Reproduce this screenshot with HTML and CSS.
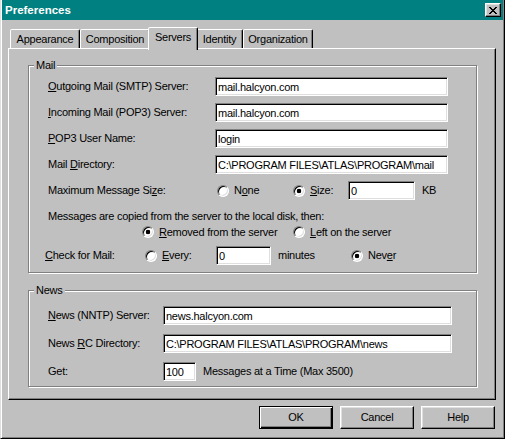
FILE: index.html
```html
<!DOCTYPE html>
<html>
<head>
<meta charset="utf-8">
<title>Preferences</title>
<link rel="stylesheet" href="styles.css">
</head>
<body>
<div class="window">
  <div class="titlebar">
    <span class="title">Preferences</span>
    <span class="close"><svg width="8" height="7" viewBox="0 0 8 7" shape-rendering="crispEdges"><path d="M0 0h2v1h-2zM6 0h2v1h-2zM1 1h2v1h-2zM5 1h2v1h-2zM2 2h4v1h-4zM3 3h2v1h-2zM2 4h4v1h-4zM1 5h2v1h-2zM5 5h2v1h-2zM0 6h2v1h-2zM6 6h2v1h-2z" fill="#000"/></svg></span>
  </div>
  <div class="content">
    <div class="tabs">
      <div class="tab t-app">Appearance</div>
      <div class="tab t-comp">Composition</div>
      <div class="tab t-srv active">Servers</div>
      <div class="tab t-id">Identity</div>
      <div class="tab t-org">Organization</div>
    </div>
    <div class="panel">
      <fieldset class="group mail">
        <legend>Mail</legend>
        <div class="gbody">
          <div class="row"><span class="lbl"><u>O</u>utgoing Mail (SMTP) Server:</span><input class="field w-mail" type="text" value="mail.halcyon.com"></div>
          <div class="row"><span class="lbl"><u>I</u>ncoming Mail (POP3) Server:</span><input class="field w-mail" type="text" value="mail.halcyon.com"></div>
          <div class="row"><span class="lbl"><u>P</u>OP3 User Name:</span><input class="field w-mail" type="text" value="login"></div>
          <div class="row"><span class="lbl">Mail <u>D</u>irectory:</span><input class="field w-mail" type="text" value="C:\PROGRAM FILES\ATLAS\PROGRAM\mail"></div>
          <div class="row">
            <span class="lbl">Maximum Message Si<u>z</u>e:</span>
            <span class="opt o-none"><span class="radio"></span><span>N<u>o</u>ne</span></span>
            <span class="opt o-size"><span class="radio on"></span><span><u>S</u>ize:</span></span>
            <input class="field w-size" type="text" value="0">
            <span class="unit">KB</span>
          </div>
          <div class="note">Messages are copied from the server to the local disk, then:</div>
          <div class="row r-removed">
            <span class="opt o-removed"><span class="radio on"></span><span><u>R</u>emoved from the server</span></span>
            <span class="opt"><span class="radio"></span><span><u>L</u>eft on the server</span></span>
          </div>
          <div class="row">
            <span class="lbl-check"><u>C</u>heck for Mail:</span>
            <span class="opt o-every"><span class="radio"></span><span><u>E</u>very:</span></span>
            <input class="field w-every" type="text" value="0">
            <span class="minutes">minutes</span>
            <span class="opt"><span class="radio on"></span><span>Nev<u>e</u>r</span></span>
          </div>
        </div>
      </fieldset>
      <fieldset class="group news">
        <legend>News</legend>
        <div class="gbody">
          <div class="row"><span class="lbl-n"><u>N</u>ews (NNTP) Server:</span><input class="field w-news" type="text" value="news.halcyon.com"></div>
          <div class="row"><span class="lbl-n">News <u>R</u>C Directory:</span><input class="field w-news" type="text" value="C:\PROGRAM FILES\ATLAS\PROGRAM\news"></div>
          <div class="row"><span class="lbl-n">Get:</span><input class="field w-get" type="text" value="100"><span class="unit">Messages at a Time (Max 3500)</span></div>
        </div>
      </fieldset>
    </div>
    <div class="buttons">
      <button class="btn default" type="button">OK</button>
      <button class="btn" type="button">Cancel</button>
      <button class="btn" type="button">Help</button>
    </div>
  </div>
</div>
</body>
</html>
```
FILE: styles.css
```css
* { box-sizing: border-box; }
html, body { margin: 0; padding: 0; }
body {
  width: 505px;
  height: 439px;
  overflow: hidden;
  background: #c0c0c0;
  font: 11px/13px "Liberation Sans", Arial, sans-serif;
  letter-spacing: -0.25px;
  color: #000;
}
u { text-decoration: underline; text-underline-offset: 1px; }

.window {
  width: 505px;
  height: 439px;
  background: #c0c0c0;
  border-left: 1px solid #dfdfdf;
  border-right: 1px solid #000;
  border-bottom: 1px solid #000;
  box-shadow: inset 1px 0 #fff, inset -1px -1px #808080;
}
.titlebar {
  height: 20px;
  margin: 0 1px;
  background: #008080;
  display: flex;
  align-items: center;
  justify-content: space-between;
  padding: 0 2px 0 3px;
}
.title {
  color: #fff;
  font-weight: bold;
  font-size: 11.5px;
  letter-spacing: 0;
}
.close {
  width: 16px;
  height: 14px;
  display: flex;
  align-items: center;
  justify-content: center;
  background: #c0c0c0;
  border: 1px solid;
  border-color: #fff #000 #000 #fff;
  box-shadow: inset -1px -1px #808080, inset 1px 1px #dfdfdf;
}
.close svg { display: block; }

.content { padding: 7px 8px 0 7px; }

.tabs {
  display: flex;
  align-items: flex-end;
  height: 21px;
  padding-left: 2px;
}
.tab {
  flex: none;
  height: 19px;
  padding-top: 3px;
  text-align: center;
  border: 1px solid;
  border-bottom: 0;
  border-color: #fff #000 transparent #fff;
  box-shadow: inset -1px 0 #808080;
  border-radius: 2px 2px 0 0;
  background: #c0c0c0;
}
.tab.active {
  height: 23px;
  margin: 0 -2px -2px;
  padding-top: 3px;
  position: relative;
  z-index: 1;
}
.t-app { width: 70px; }
.t-comp { width: 70px; }
.t-srv { width: 50px; }
.t-id { width: 47px; }
.t-org { width: 70px; }

.panel {
  height: 352px;
  background: #c0c0c0;
  border: 1px solid;
  border-color: #fff #000 #000 #fff;
  box-shadow: inset -1px -1px #808080;
  padding: 10px 18px 0 19px;
}

.group {
  margin: 0;
  padding: 0;
  min-width: 0;
  border: 1px solid #808080;
  box-shadow: inset 1px 1px #fff, 1px 1px #fff;
}
.group legend {
  margin-left: 5px;
  padding: 0 2px;
  line-height: 13px;
  background: #c0c0c0;
}
.news { margin-top: 11px; }
.gbody { padding: 5px 0 7px 19px; }
.news .gbody { padding: 9px 0 5px 19px; }

.row {
  display: flex;
  align-items: center;
  height: 19px;
  white-space: nowrap;
}
.row + .row { margin-top: 7px; }
.news .row + .row { margin-top: 9px; }

.lbl { flex: none; width: 167px; }
.lbl-n { flex: none; width: 115px; }
.lbl-check { flex: none; width: 100px; margin-left: -3px; }

.field {
  flex: none;
  height: 19px;
  margin: 0;
  padding: 0 2px;
  border: 1px solid;
  border-color: #808080 #fff #fff #808080;
  box-shadow: inset 1px 1px #000, inset -1px -1px #dfdfdf;
  background: #fff;
  font: inherit;
  letter-spacing: inherit;
  color: #000;
  outline: none;
}
.w-mail { width: 233px; }
.w-size { width: 67px; }
.w-every { width: 55px; }
.w-news { width: 289px; }
.w-get { width: 33px; }

.unit { margin-left: 7px; }

.opt {
  flex: none;
  display: flex;
  align-items: center;
  gap: 5px;
}
.o-none { margin-left: 2px; width: 76px; }
.o-size { width: 55px; }
.o-removed { width: 151px; }
.o-every { width: 71px; }
.minutes { flex: none; width: 73px; margin-left: 7px; }

.radio {
  flex: none;
  width: 12px;
  height: 12px;
  border-radius: 50%;
  border: 1px solid;
  border-color: #808080 #fff #fff #808080;
  box-shadow: inset 1px 1px #000, inset -1px -1px #dfdfdf;
  background: #fff;
}
.radio.on { background: radial-gradient(circle, #000 0 2px, #fff 2.6px); }

.note { margin-top: 10px; line-height: 13px; white-space: nowrap; }
.r-removed { height: 14px; margin-top: 2px; padding-left: 94px; }

.buttons {
  display: flex;
  justify-content: flex-end;
  gap: 7px;
  margin-top: 6px;
  padding-right: 1px;
}
.btn {
  width: 74px;
  height: 23px;
  margin: 0;
  padding: 0;
  font: inherit;
  letter-spacing: inherit;
  color: #000;
  background: #c0c0c0;
  border: 1px solid;
  border-color: #fff #000 #000 #fff;
  box-shadow: inset -1px -1px #808080, inset 1px 1px #dfdfdf;
}
.btn.default {
  border-color: #000;
  box-shadow: inset 1px 1px #fff, inset -1px -1px #000, inset -2px -2px #808080;
}
```
